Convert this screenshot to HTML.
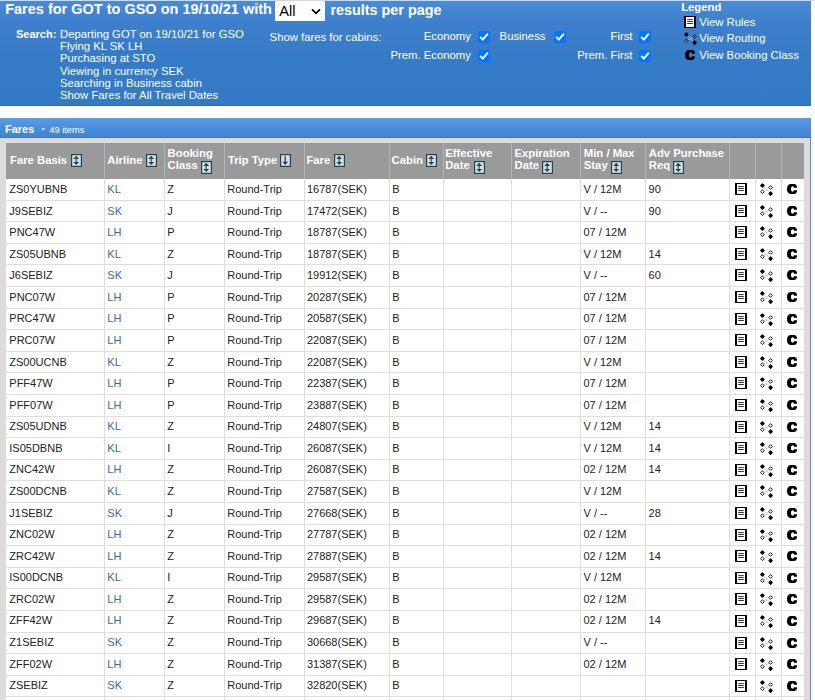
<!DOCTYPE html><html><head><meta charset="utf-8"><style>

html,body{margin:0;padding:0;}
body{width:815px;height:700px;overflow:hidden;position:relative;background:#fff;font-family:"Liberation Sans",sans-serif;}
.a{position:absolute;white-space:nowrap;}
.w{color:#fff;}
.hdr{position:absolute;left:0;top:1px;width:811px;height:105px;background:linear-gradient(to bottom,#4b8bd6 0px,#3d7fcc 22px,#367bc6 60px,#3379c4 104px,#2c6fba 104px,#2c6fba 105px);}
.top{position:absolute;left:0;top:0;width:815px;height:1px;background:#d5d7da;}
.bar{position:absolute;left:0;top:118px;width:811px;height:20px;background:linear-gradient(to bottom,#5b9ce2 0px,#4a8dda 10px,#3f84d4 19px,#3579c6 19px);}
.pbody{position:absolute;left:0;top:138px;width:810px;height:562px;background:#dcdcdc;border-right:1px solid #5a8fd0;}
.gh{position:absolute;background:#9a9a9a;}
.gb{position:absolute;background:#fff;}
.vl{position:absolute;width:1px;}
.hl{position:absolute;height:1px;}
.t{position:absolute;white-space:nowrap;font-size:11.0px;color:#222;line-height:1;}
.th{position:absolute;white-space:nowrap;font-size:11.3px;font-weight:bold;color:#fff;line-height:12.2px;}
.lk{color:#4068a8;}
.cb{position:absolute;width:12px;height:12px;border-radius:2px;background:#0075ff;}

</style></head><body>
<div class="top"></div>
<div class="hdr"></div>
<div class="a" style="left:5.20px;top:2.43px;font-size:14.5px;line-height:1;font-weight:bold;color:#fff;">Fares for GOT to GSO on 19/10/21 with</div>
<div class="a" style="left:330.40px;top:2.51px;font-size:14.4px;line-height:1;font-weight:bold;color:#fff;">results per page</div>
<div class="a" style="left:275px;top:1px;width:50px;height:20px;background:#fff;border-radius:1px"></div>
<div class="a" style="left:279.30px;top:3.84px;font-size:14.6px;line-height:1;color:#000;">All</div>
<svg class="a" style="left:310.8px;top:8.2px" width="10" height="7" viewBox="0 0 10 7"><path d="M1 1.3 L5 5.3 L9 1.3" fill="none" stroke="#000" stroke-width="1.8"/></svg>
<div class="a" style="left:16.00px;top:28.89px;font-size:11.0px;line-height:1;font-weight:bold;color:#fff;">Search:</div>
<div class="a" style="left:60.00px;top:28.63px;font-size:11.3px;line-height:1;color:#fff;">Departing GOT on 19/10/21 for GSO</div>
<div class="a" style="left:60.00px;top:40.93px;font-size:11.3px;line-height:1;color:#fff;">Flying KL SK LH</div>
<div class="a" style="left:60.00px;top:53.23px;font-size:11.3px;line-height:1;color:#fff;">Purchasing at STO</div>
<div class="a" style="left:60.00px;top:65.53px;font-size:11.3px;line-height:1;color:#fff;">Viewing in currency SEK</div>
<div class="a" style="left:60.00px;top:77.83px;font-size:11.3px;line-height:1;color:#fff;">Searching in Business cabin</div>
<div class="a" style="left:60.00px;top:90.13px;font-size:11.3px;line-height:1;color:#fff;">Show Fares for All Travel Dates</div>
<div class="a" style="left:269.60px;top:32.03px;font-size:11.3px;line-height:1;color:#fff;">Show fares for cabins:</div>
<div class="a" style="right:344.20px;top:31.43px;font-size:11.3px;line-height:1;color:#fff;text-align:right">Economy</div>
<div class="cb" style="left:478px;top:31.3px"><svg width="12" height="12" viewBox="0 0 12 12" style="position:absolute;left:0;top:0"><path d="M2.2 5.9 L4.8 8.6 L9.9 2.6" fill="none" stroke="#fff" stroke-width="2"/></svg></div>
<div class="a" style="left:499.60px;top:31.43px;font-size:11.3px;line-height:1;color:#fff;">Business</div>
<div class="cb" style="left:553.6px;top:31.3px"><svg width="12" height="12" viewBox="0 0 12 12" style="position:absolute;left:0;top:0"><path d="M2.2 5.9 L4.8 8.6 L9.9 2.6" fill="none" stroke="#fff" stroke-width="2"/></svg></div>
<div class="a" style="right:182.50px;top:31.43px;font-size:11.3px;line-height:1;color:#fff;text-align:right">First</div>
<div class="cb" style="left:639.4px;top:31.3px"><svg width="12" height="12" viewBox="0 0 12 12" style="position:absolute;left:0;top:0"><path d="M2.2 5.9 L4.8 8.6 L9.9 2.6" fill="none" stroke="#fff" stroke-width="2"/></svg></div>
<div class="a" style="right:344.20px;top:50.03px;font-size:11.3px;line-height:1;color:#fff;text-align:right">Prem. Economy</div>
<div class="cb" style="left:478px;top:50.2px"><svg width="12" height="12" viewBox="0 0 12 12" style="position:absolute;left:0;top:0"><path d="M2.2 5.9 L4.8 8.6 L9.9 2.6" fill="none" stroke="#fff" stroke-width="2"/></svg></div>
<div class="a" style="right:182.50px;top:50.03px;font-size:11.3px;line-height:1;color:#fff;text-align:right">Prem. First</div>
<div class="cb" style="left:639.4px;top:50.2px"><svg width="12" height="12" viewBox="0 0 12 12" style="position:absolute;left:0;top:0"><path d="M2.2 5.9 L4.8 8.6 L9.9 2.6" fill="none" stroke="#fff" stroke-width="2"/></svg></div>
<div class="a" style="left:681.20px;top:2.13px;font-size:11.3px;line-height:1;font-weight:bold;color:#fff;">Legend</div>
<div class="a" style="left:684px;top:16px;line-height:0"><svg width="12" height="12" viewBox="0 0 12 12"><rect x="0" y="0" width="12" height="12" fill="#000"/><rect x="2" y="1" width="8" height="10" fill="#fff"/><rect x="3.2" y="3.1" width="5.6" height="1" fill="#333"/><rect x="3.2" y="5" width="5.6" height="1" fill="#333"/><rect x="3.2" y="7" width="5.6" height="1" fill="#333"/></svg></div>
<div class="a" style="left:699.20px;top:16.63px;font-size:11.3px;line-height:1;color:#fff;">View Rules</div>
<div class="a" style="left:683.5px;top:32px;line-height:0"><svg width="14" height="13" viewBox="0 0 14 13"><path d="M3.6 3.7 L9.4 9.4 M3.8 8.0 L9.2 5.2" fill="none" stroke="#c4c4c4" stroke-width="0.7"/><path d="M2.40 0.90 L4.00 2.50 L2.40 4.10 L0.80 2.50 Z M10.60 9.00 L12.20 10.60 L10.60 12.20 L9.00 10.60 Z" fill="#000" stroke="#000" stroke-width="1.3" stroke-linejoin="round"/><path d="M10.60 2.65 L12.45 4.50 L10.60 6.35 L8.75 4.50 Z M2.40 6.85 L4.25 8.70 L2.40 10.55 L0.55 8.70 Z" fill="none" stroke="#1a1a1a" stroke-width="1" stroke-linejoin="round"/></svg></div>
<div class="a" style="left:699.20px;top:33.43px;font-size:11.3px;line-height:1;color:#fff;">View Routing</div>
<div class="a" style="left:685px;top:50px;line-height:0"><svg width="10" height="10" viewBox="0 0 10 10"><path d="M3.4 0 L7.4 0 Q9.5 0.4 10 2.6 L10 3.7 L7 3.7 Q6.8 2.3 5.5 2.3 Q3.9 2.4 3.9 5 Q3.9 7.6 5.5 7.7 Q6.8 7.7 7 6.3 L10 6.3 L10 7.4 Q9.5 9.6 7.4 10 L3.4 10 Q0 9.6 0 5 Q0 0.4 3.4 0 Z" fill="#000"/></svg></div>
<div class="a" style="left:699.20px;top:50.13px;font-size:11.3px;line-height:1;color:#fff;">View Booking Class</div>
<div class="bar"></div>
<div class="a" style="left:5.00px;top:123.89px;font-size:11.0px;line-height:1;font-weight:bold;color:#fff;">Fares</div><div class="a" style="left:41.80px;top:125.23px;font-size:8px;line-height:1;color:#fff;">&bull;</div><div class="a" style="left:49.30px;top:126.33px;font-size:9.3px;line-height:1;color:#fff;">49 items</div>
<div class="pbody"></div>
<div class="gh" style="left:6px;top:143px;width:798.2px;height:35.69999999999999px"></div>
<div class="gb" style="left:6px;top:178.7px;width:798.2px;height:521.3px"></div>
<div class="vl" style="left:104px;top:143px;height:35.69999999999999px;background:#b4b4b4"></div>
<div class="vl" style="left:104px;top:178.7px;height:521.3px;background:#dedede"></div>
<div class="vl" style="left:164px;top:143px;height:35.69999999999999px;background:#b4b4b4"></div>
<div class="vl" style="left:164px;top:178.7px;height:521.3px;background:#dedede"></div>
<div class="vl" style="left:224px;top:143px;height:35.69999999999999px;background:#b4b4b4"></div>
<div class="vl" style="left:224px;top:178.7px;height:521.3px;background:#dedede"></div>
<div class="vl" style="left:303.6px;top:143px;height:35.69999999999999px;background:#b4b4b4"></div>
<div class="vl" style="left:303.6px;top:178.7px;height:521.3px;background:#dedede"></div>
<div class="vl" style="left:389px;top:143px;height:35.69999999999999px;background:#b4b4b4"></div>
<div class="vl" style="left:389px;top:178.7px;height:521.3px;background:#dedede"></div>
<div class="vl" style="left:442.6px;top:143px;height:35.69999999999999px;background:#b4b4b4"></div>
<div class="vl" style="left:442.6px;top:178.7px;height:521.3px;background:#dedede"></div>
<div class="vl" style="left:510.6px;top:143px;height:35.69999999999999px;background:#b4b4b4"></div>
<div class="vl" style="left:510.6px;top:178.7px;height:521.3px;background:#dedede"></div>
<div class="vl" style="left:580.2px;top:143px;height:35.69999999999999px;background:#b4b4b4"></div>
<div class="vl" style="left:580.2px;top:178.7px;height:521.3px;background:#dedede"></div>
<div class="vl" style="left:645.3px;top:143px;height:35.69999999999999px;background:#b4b4b4"></div>
<div class="vl" style="left:645.3px;top:178.7px;height:521.3px;background:#dedede"></div>
<div class="vl" style="left:729px;top:143px;height:35.69999999999999px;background:#b4b4b4"></div>
<div class="vl" style="left:729px;top:178.7px;height:521.3px;background:#dedede"></div>
<div class="vl" style="left:755px;top:143px;height:35.69999999999999px;background:#b4b4b4"></div>
<div class="vl" style="left:755px;top:178.7px;height:521.3px;background:#dedede"></div>
<div class="vl" style="left:781px;top:143px;height:35.69999999999999px;background:#b4b4b4"></div>
<div class="vl" style="left:781px;top:178.7px;height:521.3px;background:#dedede"></div>
<div class="hl" style="left:6px;top:199.69px;width:798.2px;background:#dedede"></div>
<div class="hl" style="left:6px;top:221.28px;width:798.2px;background:#dedede"></div>
<div class="hl" style="left:6px;top:242.87px;width:798.2px;background:#dedede"></div>
<div class="hl" style="left:6px;top:264.46px;width:798.2px;background:#dedede"></div>
<div class="hl" style="left:6px;top:286.05px;width:798.2px;background:#dedede"></div>
<div class="hl" style="left:6px;top:307.64px;width:798.2px;background:#dedede"></div>
<div class="hl" style="left:6px;top:329.24px;width:798.2px;background:#dedede"></div>
<div class="hl" style="left:6px;top:350.83px;width:798.2px;background:#dedede"></div>
<div class="hl" style="left:6px;top:372.42px;width:798.2px;background:#dedede"></div>
<div class="hl" style="left:6px;top:394.01px;width:798.2px;background:#dedede"></div>
<div class="hl" style="left:6px;top:415.60px;width:798.2px;background:#dedede"></div>
<div class="hl" style="left:6px;top:437.19px;width:798.2px;background:#dedede"></div>
<div class="hl" style="left:6px;top:458.78px;width:798.2px;background:#dedede"></div>
<div class="hl" style="left:6px;top:480.37px;width:798.2px;background:#dedede"></div>
<div class="hl" style="left:6px;top:501.96px;width:798.2px;background:#dedede"></div>
<div class="hl" style="left:6px;top:523.56px;width:798.2px;background:#dedede"></div>
<div class="hl" style="left:6px;top:545.15px;width:798.2px;background:#dedede"></div>
<div class="hl" style="left:6px;top:566.74px;width:798.2px;background:#dedede"></div>
<div class="hl" style="left:6px;top:588.33px;width:798.2px;background:#dedede"></div>
<div class="hl" style="left:6px;top:609.92px;width:798.2px;background:#dedede"></div>
<div class="hl" style="left:6px;top:631.51px;width:798.2px;background:#dedede"></div>
<div class="hl" style="left:6px;top:653.10px;width:798.2px;background:#dedede"></div>
<div class="hl" style="left:6px;top:674.69px;width:798.2px;background:#dedede"></div>
<div class="hl" style="left:6px;top:696.28px;width:798.2px;background:#dedede"></div>
<div class="a" style="left:10.00px;top:154.63px;font-size:11.3px;line-height:1;font-weight:bold;color:#fff;">Fare Basis</div>
<div class="a" style="left:71.00px;top:154.00px;line-height:0"><svg width="11" height="13" viewBox="0 0 11 13"><rect x="0.6" y="0.6" width="9.8" height="11.8" fill="#dcdce8" stroke="#1a4b4b" stroke-width="1.2"/><path d="M5.2 1.8 L2.3 4.9 L8.1 4.9 Z M2.3 8.0 L8.1 8.0 L5.2 11.1 Z" fill="#174848"/><rect x="4.5" y="4.6" width="1.4" height="3.6" fill="#3a6a6a"/></svg></div>
<div class="a" style="left:107.30px;top:154.63px;font-size:11.3px;line-height:1;font-weight:bold;color:#fff;">Airline</div>
<div class="a" style="left:145.60px;top:154.00px;line-height:0"><svg width="11" height="13" viewBox="0 0 11 13"><rect x="0.6" y="0.6" width="9.8" height="11.8" fill="#dcdce8" stroke="#1a4b4b" stroke-width="1.2"/><path d="M5.2 1.8 L2.3 4.9 L8.1 4.9 Z M2.3 8.0 L8.1 8.0 L5.2 11.1 Z" fill="#174848"/><rect x="4.5" y="4.6" width="1.4" height="3.6" fill="#3a6a6a"/></svg></div>
<div class="a" style="left:167.60px;top:147.93px;font-size:11.3px;line-height:1;font-weight:bold;color:#fff;">Booking</div>
<div class="a" style="left:167.60px;top:160.03px;font-size:11.3px;line-height:1;font-weight:bold;color:#fff;">Class</div>
<div class="a" style="left:200.60px;top:160.50px;line-height:0"><svg width="11" height="13" viewBox="0 0 11 13"><rect x="0.6" y="0.6" width="9.8" height="11.8" fill="#dcdce8" stroke="#1a4b4b" stroke-width="1.2"/><path d="M5.2 1.8 L2.3 4.9 L8.1 4.9 Z M2.3 8.0 L8.1 8.0 L5.2 11.1 Z" fill="#174848"/><rect x="4.5" y="4.6" width="1.4" height="3.6" fill="#3a6a6a"/></svg></div>
<div class="a" style="left:227.90px;top:154.63px;font-size:11.3px;line-height:1;font-weight:bold;color:#fff;">Trip Type</div>
<div class="a" style="left:279.60px;top:154.00px;line-height:0"><svg width="11" height="13" viewBox="0 0 11 13"><rect x="0.6" y="0.6" width="9.8" height="11.8" fill="#dcdce8" stroke="#1a4b4b" stroke-width="1.2"/><rect x="4.4" y="1.8" width="1.6" height="6.6" fill="#3a6a6a"/><path d="M2.3 7.7 L8.1 7.7 L5.2 10.9 Z" fill="#174848"/></svg></div>
<div class="a" style="left:306.40px;top:154.63px;font-size:11.3px;line-height:1;font-weight:bold;color:#fff;">Fare</div>
<div class="a" style="left:334.40px;top:154.00px;line-height:0"><svg width="11" height="13" viewBox="0 0 11 13"><rect x="0.6" y="0.6" width="9.8" height="11.8" fill="#dcdce8" stroke="#1a4b4b" stroke-width="1.2"/><path d="M5.2 1.8 L2.3 4.9 L8.1 4.9 Z M2.3 8.0 L8.1 8.0 L5.2 11.1 Z" fill="#174848"/><rect x="4.5" y="4.6" width="1.4" height="3.6" fill="#3a6a6a"/></svg></div>
<div class="a" style="left:391.60px;top:154.63px;font-size:11.3px;line-height:1;font-weight:bold;color:#fff;">Cabin</div>
<div class="a" style="left:426.40px;top:154.00px;line-height:0"><svg width="11" height="13" viewBox="0 0 11 13"><rect x="0.6" y="0.6" width="9.8" height="11.8" fill="#dcdce8" stroke="#1a4b4b" stroke-width="1.2"/><path d="M5.2 1.8 L2.3 4.9 L8.1 4.9 Z M2.3 8.0 L8.1 8.0 L5.2 11.1 Z" fill="#174848"/><rect x="4.5" y="4.6" width="1.4" height="3.6" fill="#3a6a6a"/></svg></div>
<div class="a" style="left:445.20px;top:147.93px;font-size:11.3px;line-height:1;font-weight:bold;color:#fff;">Effective</div>
<div class="a" style="left:445.20px;top:160.03px;font-size:11.3px;line-height:1;font-weight:bold;color:#fff;">Date</div>
<div class="a" style="left:473.60px;top:160.50px;line-height:0"><svg width="11" height="13" viewBox="0 0 11 13"><rect x="0.6" y="0.6" width="9.8" height="11.8" fill="#dcdce8" stroke="#1a4b4b" stroke-width="1.2"/><path d="M5.2 1.8 L2.3 4.9 L8.1 4.9 Z M2.3 8.0 L8.1 8.0 L5.2 11.1 Z" fill="#174848"/><rect x="4.5" y="4.6" width="1.4" height="3.6" fill="#3a6a6a"/></svg></div>
<div class="a" style="left:514.50px;top:147.93px;font-size:11.3px;line-height:1;font-weight:bold;color:#fff;">Expiration</div>
<div class="a" style="left:514.50px;top:160.03px;font-size:11.3px;line-height:1;font-weight:bold;color:#fff;">Date</div>
<div class="a" style="left:542.20px;top:160.50px;line-height:0"><svg width="11" height="13" viewBox="0 0 11 13"><rect x="0.6" y="0.6" width="9.8" height="11.8" fill="#dcdce8" stroke="#1a4b4b" stroke-width="1.2"/><path d="M5.2 1.8 L2.3 4.9 L8.1 4.9 Z M2.3 8.0 L8.1 8.0 L5.2 11.1 Z" fill="#174848"/><rect x="4.5" y="4.6" width="1.4" height="3.6" fill="#3a6a6a"/></svg></div>
<div class="a" style="left:583.80px;top:147.93px;font-size:11.3px;line-height:1;font-weight:bold;color:#fff;">Min / Max</div>
<div class="a" style="left:583.80px;top:160.03px;font-size:11.3px;line-height:1;font-weight:bold;color:#fff;">Stay</div>
<div class="a" style="left:611.40px;top:160.50px;line-height:0"><svg width="11" height="13" viewBox="0 0 11 13"><rect x="0.6" y="0.6" width="9.8" height="11.8" fill="#dcdce8" stroke="#1a4b4b" stroke-width="1.2"/><path d="M5.2 1.8 L2.3 4.9 L8.1 4.9 Z M2.3 8.0 L8.1 8.0 L5.2 11.1 Z" fill="#174848"/><rect x="4.5" y="4.6" width="1.4" height="3.6" fill="#3a6a6a"/></svg></div>
<div class="a" style="left:648.80px;top:147.93px;font-size:11.3px;line-height:1;font-weight:bold;color:#fff;">Adv Purchase</div>
<div class="a" style="left:648.80px;top:160.03px;font-size:11.3px;line-height:1;font-weight:bold;color:#fff;">Req</div>
<div class="a" style="left:673.20px;top:160.50px;line-height:0"><svg width="11" height="13" viewBox="0 0 11 13"><rect x="0.6" y="0.6" width="9.8" height="11.8" fill="#dcdce8" stroke="#1a4b4b" stroke-width="1.2"/><path d="M5.2 1.8 L2.3 4.9 L8.1 4.9 Z M2.3 8.0 L8.1 8.0 L5.2 11.1 Z" fill="#174848"/><rect x="4.5" y="4.6" width="1.4" height="3.6" fill="#3a6a6a"/></svg></div>
<div class="t" style="left:9.30px;top:183.99px">ZS0YUBNB</div>
<div class="t lk" style="left:107.30px;top:183.99px">KL</div>
<div class="t" style="left:167.30px;top:183.99px">Z</div>
<div class="t" style="left:227.30px;top:183.99px">Round-Trip</div>
<div class="t" style="left:306.90px;top:183.99px">16787(SEK)</div>
<div class="t" style="left:392.30px;top:183.99px">B</div>
<div class="t" style="left:583.50px;top:183.99px">V / 12M</div>
<div class="t" style="left:648.60px;top:183.99px">90</div>
<div class="a" style="left:735px;top:183.00px;line-height:0"><svg width="12" height="12" viewBox="0 0 12 12"><rect x="0" y="0" width="12" height="12" fill="#000"/><rect x="2" y="1" width="8" height="10" fill="#fff"/><rect x="3.2" y="3.1" width="5.6" height="1" fill="#333"/><rect x="3.2" y="5" width="5.6" height="1" fill="#333"/><rect x="3.2" y="7" width="5.6" height="1" fill="#333"/></svg></div><div class="a" style="left:760px;top:183.00px;line-height:0;margin-top:-0.1px"><svg width="14" height="13" viewBox="0 0 14 13"><path d="M3.6 3.7 L9.4 9.4 M3.8 8.0 L9.2 5.2" fill="none" stroke="#c4c4c4" stroke-width="0.7"/><path d="M2.40 0.90 L4.00 2.50 L2.40 4.10 L0.80 2.50 Z M10.60 9.00 L12.20 10.60 L10.60 12.20 L9.00 10.60 Z" fill="#000" stroke="#000" stroke-width="1.3" stroke-linejoin="round"/><path d="M10.60 2.65 L12.45 4.50 L10.60 6.35 L8.75 4.50 Z M2.40 6.85 L4.25 8.70 L2.40 10.55 L0.55 8.70 Z" fill="none" stroke="#1a1a1a" stroke-width="1" stroke-linejoin="round"/></svg></div><div class="a" style="left:787px;top:183.00px;line-height:0;margin-top:1px"><svg width="10" height="10" viewBox="0 0 10 10"><path d="M3.4 0 L7.4 0 Q9.5 0.4 10 2.6 L10 3.7 L7 3.7 Q6.8 2.3 5.5 2.3 Q3.9 2.4 3.9 5 Q3.9 7.6 5.5 7.7 Q6.8 7.7 7 6.3 L10 6.3 L10 7.4 Q9.5 9.6 7.4 10 L3.4 10 Q0 9.6 0 5 Q0 0.4 3.4 0 Z" fill="#000"/></svg></div>
<div class="t" style="left:9.30px;top:205.56px">J9SEBIZ</div>
<div class="t lk" style="left:107.30px;top:205.56px">SK</div>
<div class="t" style="left:167.30px;top:205.56px">J</div>
<div class="t" style="left:227.30px;top:205.56px">Round-Trip</div>
<div class="t" style="left:306.90px;top:205.56px">17472(SEK)</div>
<div class="t" style="left:392.30px;top:205.56px">B</div>
<div class="t" style="left:583.50px;top:205.56px">V / --</div>
<div class="t" style="left:648.60px;top:205.56px">90</div>
<div class="a" style="left:735px;top:204.60px;line-height:0"><svg width="12" height="12" viewBox="0 0 12 12"><rect x="0" y="0" width="12" height="12" fill="#000"/><rect x="2" y="1" width="8" height="10" fill="#fff"/><rect x="3.2" y="3.1" width="5.6" height="1" fill="#333"/><rect x="3.2" y="5" width="5.6" height="1" fill="#333"/><rect x="3.2" y="7" width="5.6" height="1" fill="#333"/></svg></div><div class="a" style="left:760px;top:204.60px;line-height:0;margin-top:-0.1px"><svg width="14" height="13" viewBox="0 0 14 13"><path d="M3.6 3.7 L9.4 9.4 M3.8 8.0 L9.2 5.2" fill="none" stroke="#c4c4c4" stroke-width="0.7"/><path d="M2.40 0.90 L4.00 2.50 L2.40 4.10 L0.80 2.50 Z M10.60 9.00 L12.20 10.60 L10.60 12.20 L9.00 10.60 Z" fill="#000" stroke="#000" stroke-width="1.3" stroke-linejoin="round"/><path d="M10.60 2.65 L12.45 4.50 L10.60 6.35 L8.75 4.50 Z M2.40 6.85 L4.25 8.70 L2.40 10.55 L0.55 8.70 Z" fill="none" stroke="#1a1a1a" stroke-width="1" stroke-linejoin="round"/></svg></div><div class="a" style="left:787px;top:204.60px;line-height:0;margin-top:1px"><svg width="10" height="10" viewBox="0 0 10 10"><path d="M3.4 0 L7.4 0 Q9.5 0.4 10 2.6 L10 3.7 L7 3.7 Q6.8 2.3 5.5 2.3 Q3.9 2.4 3.9 5 Q3.9 7.6 5.5 7.7 Q6.8 7.7 7 6.3 L10 6.3 L10 7.4 Q9.5 9.6 7.4 10 L3.4 10 Q0 9.6 0 5 Q0 0.4 3.4 0 Z" fill="#000"/></svg></div>
<div class="t" style="left:9.30px;top:227.13px">PNC47W</div>
<div class="t lk" style="left:107.30px;top:227.13px">LH</div>
<div class="t" style="left:167.30px;top:227.13px">P</div>
<div class="t" style="left:227.30px;top:227.13px">Round-Trip</div>
<div class="t" style="left:306.90px;top:227.13px">18787(SEK)</div>
<div class="t" style="left:392.30px;top:227.13px">B</div>
<div class="t" style="left:583.50px;top:227.13px">07 / 12M</div>
<div class="a" style="left:735px;top:226.20px;line-height:0"><svg width="12" height="12" viewBox="0 0 12 12"><rect x="0" y="0" width="12" height="12" fill="#000"/><rect x="2" y="1" width="8" height="10" fill="#fff"/><rect x="3.2" y="3.1" width="5.6" height="1" fill="#333"/><rect x="3.2" y="5" width="5.6" height="1" fill="#333"/><rect x="3.2" y="7" width="5.6" height="1" fill="#333"/></svg></div><div class="a" style="left:760px;top:226.20px;line-height:0;margin-top:-0.1px"><svg width="14" height="13" viewBox="0 0 14 13"><path d="M3.6 3.7 L9.4 9.4 M3.8 8.0 L9.2 5.2" fill="none" stroke="#c4c4c4" stroke-width="0.7"/><path d="M2.40 0.90 L4.00 2.50 L2.40 4.10 L0.80 2.50 Z M10.60 9.00 L12.20 10.60 L10.60 12.20 L9.00 10.60 Z" fill="#000" stroke="#000" stroke-width="1.3" stroke-linejoin="round"/><path d="M10.60 2.65 L12.45 4.50 L10.60 6.35 L8.75 4.50 Z M2.40 6.85 L4.25 8.70 L2.40 10.55 L0.55 8.70 Z" fill="none" stroke="#1a1a1a" stroke-width="1" stroke-linejoin="round"/></svg></div><div class="a" style="left:787px;top:226.20px;line-height:0;margin-top:1px"><svg width="10" height="10" viewBox="0 0 10 10"><path d="M3.4 0 L7.4 0 Q9.5 0.4 10 2.6 L10 3.7 L7 3.7 Q6.8 2.3 5.5 2.3 Q3.9 2.4 3.9 5 Q3.9 7.6 5.5 7.7 Q6.8 7.7 7 6.3 L10 6.3 L10 7.4 Q9.5 9.6 7.4 10 L3.4 10 Q0 9.6 0 5 Q0 0.4 3.4 0 Z" fill="#000"/></svg></div>
<div class="t" style="left:9.30px;top:248.70px">ZS05UBNB</div>
<div class="t lk" style="left:107.30px;top:248.70px">KL</div>
<div class="t" style="left:167.30px;top:248.70px">Z</div>
<div class="t" style="left:227.30px;top:248.70px">Round-Trip</div>
<div class="t" style="left:306.90px;top:248.70px">18787(SEK)</div>
<div class="t" style="left:392.30px;top:248.70px">B</div>
<div class="t" style="left:583.50px;top:248.70px">V / 12M</div>
<div class="t" style="left:648.60px;top:248.70px">14</div>
<div class="a" style="left:735px;top:247.80px;line-height:0"><svg width="12" height="12" viewBox="0 0 12 12"><rect x="0" y="0" width="12" height="12" fill="#000"/><rect x="2" y="1" width="8" height="10" fill="#fff"/><rect x="3.2" y="3.1" width="5.6" height="1" fill="#333"/><rect x="3.2" y="5" width="5.6" height="1" fill="#333"/><rect x="3.2" y="7" width="5.6" height="1" fill="#333"/></svg></div><div class="a" style="left:760px;top:247.80px;line-height:0;margin-top:-0.1px"><svg width="14" height="13" viewBox="0 0 14 13"><path d="M3.6 3.7 L9.4 9.4 M3.8 8.0 L9.2 5.2" fill="none" stroke="#c4c4c4" stroke-width="0.7"/><path d="M2.40 0.90 L4.00 2.50 L2.40 4.10 L0.80 2.50 Z M10.60 9.00 L12.20 10.60 L10.60 12.20 L9.00 10.60 Z" fill="#000" stroke="#000" stroke-width="1.3" stroke-linejoin="round"/><path d="M10.60 2.65 L12.45 4.50 L10.60 6.35 L8.75 4.50 Z M2.40 6.85 L4.25 8.70 L2.40 10.55 L0.55 8.70 Z" fill="none" stroke="#1a1a1a" stroke-width="1" stroke-linejoin="round"/></svg></div><div class="a" style="left:787px;top:247.80px;line-height:0;margin-top:1px"><svg width="10" height="10" viewBox="0 0 10 10"><path d="M3.4 0 L7.4 0 Q9.5 0.4 10 2.6 L10 3.7 L7 3.7 Q6.8 2.3 5.5 2.3 Q3.9 2.4 3.9 5 Q3.9 7.6 5.5 7.7 Q6.8 7.7 7 6.3 L10 6.3 L10 7.4 Q9.5 9.6 7.4 10 L3.4 10 Q0 9.6 0 5 Q0 0.4 3.4 0 Z" fill="#000"/></svg></div>
<div class="t" style="left:9.30px;top:270.27px">J6SEBIZ</div>
<div class="t lk" style="left:107.30px;top:270.27px">SK</div>
<div class="t" style="left:167.30px;top:270.27px">J</div>
<div class="t" style="left:227.30px;top:270.27px">Round-Trip</div>
<div class="t" style="left:306.90px;top:270.27px">19912(SEK)</div>
<div class="t" style="left:392.30px;top:270.27px">B</div>
<div class="t" style="left:583.50px;top:270.27px">V / --</div>
<div class="t" style="left:648.60px;top:270.27px">60</div>
<div class="a" style="left:735px;top:269.40px;line-height:0"><svg width="12" height="12" viewBox="0 0 12 12"><rect x="0" y="0" width="12" height="12" fill="#000"/><rect x="2" y="1" width="8" height="10" fill="#fff"/><rect x="3.2" y="3.1" width="5.6" height="1" fill="#333"/><rect x="3.2" y="5" width="5.6" height="1" fill="#333"/><rect x="3.2" y="7" width="5.6" height="1" fill="#333"/></svg></div><div class="a" style="left:760px;top:269.40px;line-height:0;margin-top:-0.1px"><svg width="14" height="13" viewBox="0 0 14 13"><path d="M3.6 3.7 L9.4 9.4 M3.8 8.0 L9.2 5.2" fill="none" stroke="#c4c4c4" stroke-width="0.7"/><path d="M2.40 0.90 L4.00 2.50 L2.40 4.10 L0.80 2.50 Z M10.60 9.00 L12.20 10.60 L10.60 12.20 L9.00 10.60 Z" fill="#000" stroke="#000" stroke-width="1.3" stroke-linejoin="round"/><path d="M10.60 2.65 L12.45 4.50 L10.60 6.35 L8.75 4.50 Z M2.40 6.85 L4.25 8.70 L2.40 10.55 L0.55 8.70 Z" fill="none" stroke="#1a1a1a" stroke-width="1" stroke-linejoin="round"/></svg></div><div class="a" style="left:787px;top:269.40px;line-height:0;margin-top:1px"><svg width="10" height="10" viewBox="0 0 10 10"><path d="M3.4 0 L7.4 0 Q9.5 0.4 10 2.6 L10 3.7 L7 3.7 Q6.8 2.3 5.5 2.3 Q3.9 2.4 3.9 5 Q3.9 7.6 5.5 7.7 Q6.8 7.7 7 6.3 L10 6.3 L10 7.4 Q9.5 9.6 7.4 10 L3.4 10 Q0 9.6 0 5 Q0 0.4 3.4 0 Z" fill="#000"/></svg></div>
<div class="t" style="left:9.30px;top:291.84px">PNC07W</div>
<div class="t lk" style="left:107.30px;top:291.84px">LH</div>
<div class="t" style="left:167.30px;top:291.84px">P</div>
<div class="t" style="left:227.30px;top:291.84px">Round-Trip</div>
<div class="t" style="left:306.90px;top:291.84px">20287(SEK)</div>
<div class="t" style="left:392.30px;top:291.84px">B</div>
<div class="t" style="left:583.50px;top:291.84px">07 / 12M</div>
<div class="a" style="left:735px;top:291.00px;line-height:0"><svg width="12" height="12" viewBox="0 0 12 12"><rect x="0" y="0" width="12" height="12" fill="#000"/><rect x="2" y="1" width="8" height="10" fill="#fff"/><rect x="3.2" y="3.1" width="5.6" height="1" fill="#333"/><rect x="3.2" y="5" width="5.6" height="1" fill="#333"/><rect x="3.2" y="7" width="5.6" height="1" fill="#333"/></svg></div><div class="a" style="left:760px;top:291.00px;line-height:0;margin-top:-0.1px"><svg width="14" height="13" viewBox="0 0 14 13"><path d="M3.6 3.7 L9.4 9.4 M3.8 8.0 L9.2 5.2" fill="none" stroke="#c4c4c4" stroke-width="0.7"/><path d="M2.40 0.90 L4.00 2.50 L2.40 4.10 L0.80 2.50 Z M10.60 9.00 L12.20 10.60 L10.60 12.20 L9.00 10.60 Z" fill="#000" stroke="#000" stroke-width="1.3" stroke-linejoin="round"/><path d="M10.60 2.65 L12.45 4.50 L10.60 6.35 L8.75 4.50 Z M2.40 6.85 L4.25 8.70 L2.40 10.55 L0.55 8.70 Z" fill="none" stroke="#1a1a1a" stroke-width="1" stroke-linejoin="round"/></svg></div><div class="a" style="left:787px;top:291.00px;line-height:0;margin-top:1px"><svg width="10" height="10" viewBox="0 0 10 10"><path d="M3.4 0 L7.4 0 Q9.5 0.4 10 2.6 L10 3.7 L7 3.7 Q6.8 2.3 5.5 2.3 Q3.9 2.4 3.9 5 Q3.9 7.6 5.5 7.7 Q6.8 7.7 7 6.3 L10 6.3 L10 7.4 Q9.5 9.6 7.4 10 L3.4 10 Q0 9.6 0 5 Q0 0.4 3.4 0 Z" fill="#000"/></svg></div>
<div class="t" style="left:9.30px;top:313.41px">PRC47W</div>
<div class="t lk" style="left:107.30px;top:313.41px">LH</div>
<div class="t" style="left:167.30px;top:313.41px">P</div>
<div class="t" style="left:227.30px;top:313.41px">Round-Trip</div>
<div class="t" style="left:306.90px;top:313.41px">20587(SEK)</div>
<div class="t" style="left:392.30px;top:313.41px">B</div>
<div class="t" style="left:583.50px;top:313.41px">07 / 12M</div>
<div class="a" style="left:735px;top:312.60px;line-height:0"><svg width="12" height="12" viewBox="0 0 12 12"><rect x="0" y="0" width="12" height="12" fill="#000"/><rect x="2" y="1" width="8" height="10" fill="#fff"/><rect x="3.2" y="3.1" width="5.6" height="1" fill="#333"/><rect x="3.2" y="5" width="5.6" height="1" fill="#333"/><rect x="3.2" y="7" width="5.6" height="1" fill="#333"/></svg></div><div class="a" style="left:760px;top:312.60px;line-height:0;margin-top:-0.1px"><svg width="14" height="13" viewBox="0 0 14 13"><path d="M3.6 3.7 L9.4 9.4 M3.8 8.0 L9.2 5.2" fill="none" stroke="#c4c4c4" stroke-width="0.7"/><path d="M2.40 0.90 L4.00 2.50 L2.40 4.10 L0.80 2.50 Z M10.60 9.00 L12.20 10.60 L10.60 12.20 L9.00 10.60 Z" fill="#000" stroke="#000" stroke-width="1.3" stroke-linejoin="round"/><path d="M10.60 2.65 L12.45 4.50 L10.60 6.35 L8.75 4.50 Z M2.40 6.85 L4.25 8.70 L2.40 10.55 L0.55 8.70 Z" fill="none" stroke="#1a1a1a" stroke-width="1" stroke-linejoin="round"/></svg></div><div class="a" style="left:787px;top:312.60px;line-height:0;margin-top:1px"><svg width="10" height="10" viewBox="0 0 10 10"><path d="M3.4 0 L7.4 0 Q9.5 0.4 10 2.6 L10 3.7 L7 3.7 Q6.8 2.3 5.5 2.3 Q3.9 2.4 3.9 5 Q3.9 7.6 5.5 7.7 Q6.8 7.7 7 6.3 L10 6.3 L10 7.4 Q9.5 9.6 7.4 10 L3.4 10 Q0 9.6 0 5 Q0 0.4 3.4 0 Z" fill="#000"/></svg></div>
<div class="t" style="left:9.30px;top:334.98px">PRC07W</div>
<div class="t lk" style="left:107.30px;top:334.98px">LH</div>
<div class="t" style="left:167.30px;top:334.98px">P</div>
<div class="t" style="left:227.30px;top:334.98px">Round-Trip</div>
<div class="t" style="left:306.90px;top:334.98px">22087(SEK)</div>
<div class="t" style="left:392.30px;top:334.98px">B</div>
<div class="t" style="left:583.50px;top:334.98px">07 / 12M</div>
<div class="a" style="left:735px;top:334.20px;line-height:0"><svg width="12" height="12" viewBox="0 0 12 12"><rect x="0" y="0" width="12" height="12" fill="#000"/><rect x="2" y="1" width="8" height="10" fill="#fff"/><rect x="3.2" y="3.1" width="5.6" height="1" fill="#333"/><rect x="3.2" y="5" width="5.6" height="1" fill="#333"/><rect x="3.2" y="7" width="5.6" height="1" fill="#333"/></svg></div><div class="a" style="left:760px;top:334.20px;line-height:0;margin-top:-0.1px"><svg width="14" height="13" viewBox="0 0 14 13"><path d="M3.6 3.7 L9.4 9.4 M3.8 8.0 L9.2 5.2" fill="none" stroke="#c4c4c4" stroke-width="0.7"/><path d="M2.40 0.90 L4.00 2.50 L2.40 4.10 L0.80 2.50 Z M10.60 9.00 L12.20 10.60 L10.60 12.20 L9.00 10.60 Z" fill="#000" stroke="#000" stroke-width="1.3" stroke-linejoin="round"/><path d="M10.60 2.65 L12.45 4.50 L10.60 6.35 L8.75 4.50 Z M2.40 6.85 L4.25 8.70 L2.40 10.55 L0.55 8.70 Z" fill="none" stroke="#1a1a1a" stroke-width="1" stroke-linejoin="round"/></svg></div><div class="a" style="left:787px;top:334.20px;line-height:0;margin-top:1px"><svg width="10" height="10" viewBox="0 0 10 10"><path d="M3.4 0 L7.4 0 Q9.5 0.4 10 2.6 L10 3.7 L7 3.7 Q6.8 2.3 5.5 2.3 Q3.9 2.4 3.9 5 Q3.9 7.6 5.5 7.7 Q6.8 7.7 7 6.3 L10 6.3 L10 7.4 Q9.5 9.6 7.4 10 L3.4 10 Q0 9.6 0 5 Q0 0.4 3.4 0 Z" fill="#000"/></svg></div>
<div class="t" style="left:9.30px;top:356.55px">ZS00UCNB</div>
<div class="t lk" style="left:107.30px;top:356.55px">KL</div>
<div class="t" style="left:167.30px;top:356.55px">Z</div>
<div class="t" style="left:227.30px;top:356.55px">Round-Trip</div>
<div class="t" style="left:306.90px;top:356.55px">22087(SEK)</div>
<div class="t" style="left:392.30px;top:356.55px">B</div>
<div class="t" style="left:583.50px;top:356.55px">V / 12M</div>
<div class="a" style="left:735px;top:355.80px;line-height:0"><svg width="12" height="12" viewBox="0 0 12 12"><rect x="0" y="0" width="12" height="12" fill="#000"/><rect x="2" y="1" width="8" height="10" fill="#fff"/><rect x="3.2" y="3.1" width="5.6" height="1" fill="#333"/><rect x="3.2" y="5" width="5.6" height="1" fill="#333"/><rect x="3.2" y="7" width="5.6" height="1" fill="#333"/></svg></div><div class="a" style="left:760px;top:355.80px;line-height:0;margin-top:-0.1px"><svg width="14" height="13" viewBox="0 0 14 13"><path d="M3.6 3.7 L9.4 9.4 M3.8 8.0 L9.2 5.2" fill="none" stroke="#c4c4c4" stroke-width="0.7"/><path d="M2.40 0.90 L4.00 2.50 L2.40 4.10 L0.80 2.50 Z M10.60 9.00 L12.20 10.60 L10.60 12.20 L9.00 10.60 Z" fill="#000" stroke="#000" stroke-width="1.3" stroke-linejoin="round"/><path d="M10.60 2.65 L12.45 4.50 L10.60 6.35 L8.75 4.50 Z M2.40 6.85 L4.25 8.70 L2.40 10.55 L0.55 8.70 Z" fill="none" stroke="#1a1a1a" stroke-width="1" stroke-linejoin="round"/></svg></div><div class="a" style="left:787px;top:355.80px;line-height:0;margin-top:1px"><svg width="10" height="10" viewBox="0 0 10 10"><path d="M3.4 0 L7.4 0 Q9.5 0.4 10 2.6 L10 3.7 L7 3.7 Q6.8 2.3 5.5 2.3 Q3.9 2.4 3.9 5 Q3.9 7.6 5.5 7.7 Q6.8 7.7 7 6.3 L10 6.3 L10 7.4 Q9.5 9.6 7.4 10 L3.4 10 Q0 9.6 0 5 Q0 0.4 3.4 0 Z" fill="#000"/></svg></div>
<div class="t" style="left:9.30px;top:378.12px">PFF47W</div>
<div class="t lk" style="left:107.30px;top:378.12px">LH</div>
<div class="t" style="left:167.30px;top:378.12px">P</div>
<div class="t" style="left:227.30px;top:378.12px">Round-Trip</div>
<div class="t" style="left:306.90px;top:378.12px">22387(SEK)</div>
<div class="t" style="left:392.30px;top:378.12px">B</div>
<div class="t" style="left:583.50px;top:378.12px">07 / 12M</div>
<div class="a" style="left:735px;top:377.40px;line-height:0"><svg width="12" height="12" viewBox="0 0 12 12"><rect x="0" y="0" width="12" height="12" fill="#000"/><rect x="2" y="1" width="8" height="10" fill="#fff"/><rect x="3.2" y="3.1" width="5.6" height="1" fill="#333"/><rect x="3.2" y="5" width="5.6" height="1" fill="#333"/><rect x="3.2" y="7" width="5.6" height="1" fill="#333"/></svg></div><div class="a" style="left:760px;top:377.40px;line-height:0;margin-top:-0.1px"><svg width="14" height="13" viewBox="0 0 14 13"><path d="M3.6 3.7 L9.4 9.4 M3.8 8.0 L9.2 5.2" fill="none" stroke="#c4c4c4" stroke-width="0.7"/><path d="M2.40 0.90 L4.00 2.50 L2.40 4.10 L0.80 2.50 Z M10.60 9.00 L12.20 10.60 L10.60 12.20 L9.00 10.60 Z" fill="#000" stroke="#000" stroke-width="1.3" stroke-linejoin="round"/><path d="M10.60 2.65 L12.45 4.50 L10.60 6.35 L8.75 4.50 Z M2.40 6.85 L4.25 8.70 L2.40 10.55 L0.55 8.70 Z" fill="none" stroke="#1a1a1a" stroke-width="1" stroke-linejoin="round"/></svg></div><div class="a" style="left:787px;top:377.40px;line-height:0;margin-top:1px"><svg width="10" height="10" viewBox="0 0 10 10"><path d="M3.4 0 L7.4 0 Q9.5 0.4 10 2.6 L10 3.7 L7 3.7 Q6.8 2.3 5.5 2.3 Q3.9 2.4 3.9 5 Q3.9 7.6 5.5 7.7 Q6.8 7.7 7 6.3 L10 6.3 L10 7.4 Q9.5 9.6 7.4 10 L3.4 10 Q0 9.6 0 5 Q0 0.4 3.4 0 Z" fill="#000"/></svg></div>
<div class="t" style="left:9.30px;top:399.69px">PFF07W</div>
<div class="t lk" style="left:107.30px;top:399.69px">LH</div>
<div class="t" style="left:167.30px;top:399.69px">P</div>
<div class="t" style="left:227.30px;top:399.69px">Round-Trip</div>
<div class="t" style="left:306.90px;top:399.69px">23887(SEK)</div>
<div class="t" style="left:392.30px;top:399.69px">B</div>
<div class="t" style="left:583.50px;top:399.69px">07 / 12M</div>
<div class="a" style="left:735px;top:399.00px;line-height:0"><svg width="12" height="12" viewBox="0 0 12 12"><rect x="0" y="0" width="12" height="12" fill="#000"/><rect x="2" y="1" width="8" height="10" fill="#fff"/><rect x="3.2" y="3.1" width="5.6" height="1" fill="#333"/><rect x="3.2" y="5" width="5.6" height="1" fill="#333"/><rect x="3.2" y="7" width="5.6" height="1" fill="#333"/></svg></div><div class="a" style="left:760px;top:399.00px;line-height:0;margin-top:-0.1px"><svg width="14" height="13" viewBox="0 0 14 13"><path d="M3.6 3.7 L9.4 9.4 M3.8 8.0 L9.2 5.2" fill="none" stroke="#c4c4c4" stroke-width="0.7"/><path d="M2.40 0.90 L4.00 2.50 L2.40 4.10 L0.80 2.50 Z M10.60 9.00 L12.20 10.60 L10.60 12.20 L9.00 10.60 Z" fill="#000" stroke="#000" stroke-width="1.3" stroke-linejoin="round"/><path d="M10.60 2.65 L12.45 4.50 L10.60 6.35 L8.75 4.50 Z M2.40 6.85 L4.25 8.70 L2.40 10.55 L0.55 8.70 Z" fill="none" stroke="#1a1a1a" stroke-width="1" stroke-linejoin="round"/></svg></div><div class="a" style="left:787px;top:399.00px;line-height:0;margin-top:1px"><svg width="10" height="10" viewBox="0 0 10 10"><path d="M3.4 0 L7.4 0 Q9.5 0.4 10 2.6 L10 3.7 L7 3.7 Q6.8 2.3 5.5 2.3 Q3.9 2.4 3.9 5 Q3.9 7.6 5.5 7.7 Q6.8 7.7 7 6.3 L10 6.3 L10 7.4 Q9.5 9.6 7.4 10 L3.4 10 Q0 9.6 0 5 Q0 0.4 3.4 0 Z" fill="#000"/></svg></div>
<div class="t" style="left:9.30px;top:421.26px">ZS05UDNB</div>
<div class="t lk" style="left:107.30px;top:421.26px">KL</div>
<div class="t" style="left:167.30px;top:421.26px">Z</div>
<div class="t" style="left:227.30px;top:421.26px">Round-Trip</div>
<div class="t" style="left:306.90px;top:421.26px">24807(SEK)</div>
<div class="t" style="left:392.30px;top:421.26px">B</div>
<div class="t" style="left:583.50px;top:421.26px">V / 12M</div>
<div class="t" style="left:648.60px;top:421.26px">14</div>
<div class="a" style="left:735px;top:420.60px;line-height:0"><svg width="12" height="12" viewBox="0 0 12 12"><rect x="0" y="0" width="12" height="12" fill="#000"/><rect x="2" y="1" width="8" height="10" fill="#fff"/><rect x="3.2" y="3.1" width="5.6" height="1" fill="#333"/><rect x="3.2" y="5" width="5.6" height="1" fill="#333"/><rect x="3.2" y="7" width="5.6" height="1" fill="#333"/></svg></div><div class="a" style="left:760px;top:420.60px;line-height:0;margin-top:-0.1px"><svg width="14" height="13" viewBox="0 0 14 13"><path d="M3.6 3.7 L9.4 9.4 M3.8 8.0 L9.2 5.2" fill="none" stroke="#c4c4c4" stroke-width="0.7"/><path d="M2.40 0.90 L4.00 2.50 L2.40 4.10 L0.80 2.50 Z M10.60 9.00 L12.20 10.60 L10.60 12.20 L9.00 10.60 Z" fill="#000" stroke="#000" stroke-width="1.3" stroke-linejoin="round"/><path d="M10.60 2.65 L12.45 4.50 L10.60 6.35 L8.75 4.50 Z M2.40 6.85 L4.25 8.70 L2.40 10.55 L0.55 8.70 Z" fill="none" stroke="#1a1a1a" stroke-width="1" stroke-linejoin="round"/></svg></div><div class="a" style="left:787px;top:420.60px;line-height:0;margin-top:1px"><svg width="10" height="10" viewBox="0 0 10 10"><path d="M3.4 0 L7.4 0 Q9.5 0.4 10 2.6 L10 3.7 L7 3.7 Q6.8 2.3 5.5 2.3 Q3.9 2.4 3.9 5 Q3.9 7.6 5.5 7.7 Q6.8 7.7 7 6.3 L10 6.3 L10 7.4 Q9.5 9.6 7.4 10 L3.4 10 Q0 9.6 0 5 Q0 0.4 3.4 0 Z" fill="#000"/></svg></div>
<div class="t" style="left:9.30px;top:442.83px">IS05DBNB</div>
<div class="t lk" style="left:107.30px;top:442.83px">KL</div>
<div class="t" style="left:167.30px;top:442.83px">I</div>
<div class="t" style="left:227.30px;top:442.83px">Round-Trip</div>
<div class="t" style="left:306.90px;top:442.83px">26087(SEK)</div>
<div class="t" style="left:392.30px;top:442.83px">B</div>
<div class="t" style="left:583.50px;top:442.83px">V / 12M</div>
<div class="t" style="left:648.60px;top:442.83px">14</div>
<div class="a" style="left:735px;top:442.20px;line-height:0"><svg width="12" height="12" viewBox="0 0 12 12"><rect x="0" y="0" width="12" height="12" fill="#000"/><rect x="2" y="1" width="8" height="10" fill="#fff"/><rect x="3.2" y="3.1" width="5.6" height="1" fill="#333"/><rect x="3.2" y="5" width="5.6" height="1" fill="#333"/><rect x="3.2" y="7" width="5.6" height="1" fill="#333"/></svg></div><div class="a" style="left:760px;top:442.20px;line-height:0;margin-top:-0.1px"><svg width="14" height="13" viewBox="0 0 14 13"><path d="M3.6 3.7 L9.4 9.4 M3.8 8.0 L9.2 5.2" fill="none" stroke="#c4c4c4" stroke-width="0.7"/><path d="M2.40 0.90 L4.00 2.50 L2.40 4.10 L0.80 2.50 Z M10.60 9.00 L12.20 10.60 L10.60 12.20 L9.00 10.60 Z" fill="#000" stroke="#000" stroke-width="1.3" stroke-linejoin="round"/><path d="M10.60 2.65 L12.45 4.50 L10.60 6.35 L8.75 4.50 Z M2.40 6.85 L4.25 8.70 L2.40 10.55 L0.55 8.70 Z" fill="none" stroke="#1a1a1a" stroke-width="1" stroke-linejoin="round"/></svg></div><div class="a" style="left:787px;top:442.20px;line-height:0;margin-top:1px"><svg width="10" height="10" viewBox="0 0 10 10"><path d="M3.4 0 L7.4 0 Q9.5 0.4 10 2.6 L10 3.7 L7 3.7 Q6.8 2.3 5.5 2.3 Q3.9 2.4 3.9 5 Q3.9 7.6 5.5 7.7 Q6.8 7.7 7 6.3 L10 6.3 L10 7.4 Q9.5 9.6 7.4 10 L3.4 10 Q0 9.6 0 5 Q0 0.4 3.4 0 Z" fill="#000"/></svg></div>
<div class="t" style="left:9.30px;top:464.40px">ZNC42W</div>
<div class="t lk" style="left:107.30px;top:464.40px">LH</div>
<div class="t" style="left:167.30px;top:464.40px">Z</div>
<div class="t" style="left:227.30px;top:464.40px">Round-Trip</div>
<div class="t" style="left:306.90px;top:464.40px">26087(SEK)</div>
<div class="t" style="left:392.30px;top:464.40px">B</div>
<div class="t" style="left:583.50px;top:464.40px">02 / 12M</div>
<div class="t" style="left:648.60px;top:464.40px">14</div>
<div class="a" style="left:735px;top:463.80px;line-height:0"><svg width="12" height="12" viewBox="0 0 12 12"><rect x="0" y="0" width="12" height="12" fill="#000"/><rect x="2" y="1" width="8" height="10" fill="#fff"/><rect x="3.2" y="3.1" width="5.6" height="1" fill="#333"/><rect x="3.2" y="5" width="5.6" height="1" fill="#333"/><rect x="3.2" y="7" width="5.6" height="1" fill="#333"/></svg></div><div class="a" style="left:760px;top:463.80px;line-height:0;margin-top:-0.1px"><svg width="14" height="13" viewBox="0 0 14 13"><path d="M3.6 3.7 L9.4 9.4 M3.8 8.0 L9.2 5.2" fill="none" stroke="#c4c4c4" stroke-width="0.7"/><path d="M2.40 0.90 L4.00 2.50 L2.40 4.10 L0.80 2.50 Z M10.60 9.00 L12.20 10.60 L10.60 12.20 L9.00 10.60 Z" fill="#000" stroke="#000" stroke-width="1.3" stroke-linejoin="round"/><path d="M10.60 2.65 L12.45 4.50 L10.60 6.35 L8.75 4.50 Z M2.40 6.85 L4.25 8.70 L2.40 10.55 L0.55 8.70 Z" fill="none" stroke="#1a1a1a" stroke-width="1" stroke-linejoin="round"/></svg></div><div class="a" style="left:787px;top:463.80px;line-height:0;margin-top:1px"><svg width="10" height="10" viewBox="0 0 10 10"><path d="M3.4 0 L7.4 0 Q9.5 0.4 10 2.6 L10 3.7 L7 3.7 Q6.8 2.3 5.5 2.3 Q3.9 2.4 3.9 5 Q3.9 7.6 5.5 7.7 Q6.8 7.7 7 6.3 L10 6.3 L10 7.4 Q9.5 9.6 7.4 10 L3.4 10 Q0 9.6 0 5 Q0 0.4 3.4 0 Z" fill="#000"/></svg></div>
<div class="t" style="left:9.30px;top:485.97px">ZS00DCNB</div>
<div class="t lk" style="left:107.30px;top:485.97px">KL</div>
<div class="t" style="left:167.30px;top:485.97px">Z</div>
<div class="t" style="left:227.30px;top:485.97px">Round-Trip</div>
<div class="t" style="left:306.90px;top:485.97px">27587(SEK)</div>
<div class="t" style="left:392.30px;top:485.97px">B</div>
<div class="t" style="left:583.50px;top:485.97px">V / 12M</div>
<div class="a" style="left:735px;top:485.40px;line-height:0"><svg width="12" height="12" viewBox="0 0 12 12"><rect x="0" y="0" width="12" height="12" fill="#000"/><rect x="2" y="1" width="8" height="10" fill="#fff"/><rect x="3.2" y="3.1" width="5.6" height="1" fill="#333"/><rect x="3.2" y="5" width="5.6" height="1" fill="#333"/><rect x="3.2" y="7" width="5.6" height="1" fill="#333"/></svg></div><div class="a" style="left:760px;top:485.40px;line-height:0;margin-top:-0.1px"><svg width="14" height="13" viewBox="0 0 14 13"><path d="M3.6 3.7 L9.4 9.4 M3.8 8.0 L9.2 5.2" fill="none" stroke="#c4c4c4" stroke-width="0.7"/><path d="M2.40 0.90 L4.00 2.50 L2.40 4.10 L0.80 2.50 Z M10.60 9.00 L12.20 10.60 L10.60 12.20 L9.00 10.60 Z" fill="#000" stroke="#000" stroke-width="1.3" stroke-linejoin="round"/><path d="M10.60 2.65 L12.45 4.50 L10.60 6.35 L8.75 4.50 Z M2.40 6.85 L4.25 8.70 L2.40 10.55 L0.55 8.70 Z" fill="none" stroke="#1a1a1a" stroke-width="1" stroke-linejoin="round"/></svg></div><div class="a" style="left:787px;top:485.40px;line-height:0;margin-top:1px"><svg width="10" height="10" viewBox="0 0 10 10"><path d="M3.4 0 L7.4 0 Q9.5 0.4 10 2.6 L10 3.7 L7 3.7 Q6.8 2.3 5.5 2.3 Q3.9 2.4 3.9 5 Q3.9 7.6 5.5 7.7 Q6.8 7.7 7 6.3 L10 6.3 L10 7.4 Q9.5 9.6 7.4 10 L3.4 10 Q0 9.6 0 5 Q0 0.4 3.4 0 Z" fill="#000"/></svg></div>
<div class="t" style="left:9.30px;top:507.54px">J1SEBIZ</div>
<div class="t lk" style="left:107.30px;top:507.54px">SK</div>
<div class="t" style="left:167.30px;top:507.54px">J</div>
<div class="t" style="left:227.30px;top:507.54px">Round-Trip</div>
<div class="t" style="left:306.90px;top:507.54px">27668(SEK)</div>
<div class="t" style="left:392.30px;top:507.54px">B</div>
<div class="t" style="left:583.50px;top:507.54px">V / --</div>
<div class="t" style="left:648.60px;top:507.54px">28</div>
<div class="a" style="left:735px;top:507.00px;line-height:0"><svg width="12" height="12" viewBox="0 0 12 12"><rect x="0" y="0" width="12" height="12" fill="#000"/><rect x="2" y="1" width="8" height="10" fill="#fff"/><rect x="3.2" y="3.1" width="5.6" height="1" fill="#333"/><rect x="3.2" y="5" width="5.6" height="1" fill="#333"/><rect x="3.2" y="7" width="5.6" height="1" fill="#333"/></svg></div><div class="a" style="left:760px;top:507.00px;line-height:0;margin-top:-0.1px"><svg width="14" height="13" viewBox="0 0 14 13"><path d="M3.6 3.7 L9.4 9.4 M3.8 8.0 L9.2 5.2" fill="none" stroke="#c4c4c4" stroke-width="0.7"/><path d="M2.40 0.90 L4.00 2.50 L2.40 4.10 L0.80 2.50 Z M10.60 9.00 L12.20 10.60 L10.60 12.20 L9.00 10.60 Z" fill="#000" stroke="#000" stroke-width="1.3" stroke-linejoin="round"/><path d="M10.60 2.65 L12.45 4.50 L10.60 6.35 L8.75 4.50 Z M2.40 6.85 L4.25 8.70 L2.40 10.55 L0.55 8.70 Z" fill="none" stroke="#1a1a1a" stroke-width="1" stroke-linejoin="round"/></svg></div><div class="a" style="left:787px;top:507.00px;line-height:0;margin-top:1px"><svg width="10" height="10" viewBox="0 0 10 10"><path d="M3.4 0 L7.4 0 Q9.5 0.4 10 2.6 L10 3.7 L7 3.7 Q6.8 2.3 5.5 2.3 Q3.9 2.4 3.9 5 Q3.9 7.6 5.5 7.7 Q6.8 7.7 7 6.3 L10 6.3 L10 7.4 Q9.5 9.6 7.4 10 L3.4 10 Q0 9.6 0 5 Q0 0.4 3.4 0 Z" fill="#000"/></svg></div>
<div class="t" style="left:9.30px;top:529.11px">ZNC02W</div>
<div class="t lk" style="left:107.30px;top:529.11px">LH</div>
<div class="t" style="left:167.30px;top:529.11px">Z</div>
<div class="t" style="left:227.30px;top:529.11px">Round-Trip</div>
<div class="t" style="left:306.90px;top:529.11px">27787(SEK)</div>
<div class="t" style="left:392.30px;top:529.11px">B</div>
<div class="t" style="left:583.50px;top:529.11px">02 / 12M</div>
<div class="a" style="left:735px;top:528.60px;line-height:0"><svg width="12" height="12" viewBox="0 0 12 12"><rect x="0" y="0" width="12" height="12" fill="#000"/><rect x="2" y="1" width="8" height="10" fill="#fff"/><rect x="3.2" y="3.1" width="5.6" height="1" fill="#333"/><rect x="3.2" y="5" width="5.6" height="1" fill="#333"/><rect x="3.2" y="7" width="5.6" height="1" fill="#333"/></svg></div><div class="a" style="left:760px;top:528.60px;line-height:0;margin-top:-0.1px"><svg width="14" height="13" viewBox="0 0 14 13"><path d="M3.6 3.7 L9.4 9.4 M3.8 8.0 L9.2 5.2" fill="none" stroke="#c4c4c4" stroke-width="0.7"/><path d="M2.40 0.90 L4.00 2.50 L2.40 4.10 L0.80 2.50 Z M10.60 9.00 L12.20 10.60 L10.60 12.20 L9.00 10.60 Z" fill="#000" stroke="#000" stroke-width="1.3" stroke-linejoin="round"/><path d="M10.60 2.65 L12.45 4.50 L10.60 6.35 L8.75 4.50 Z M2.40 6.85 L4.25 8.70 L2.40 10.55 L0.55 8.70 Z" fill="none" stroke="#1a1a1a" stroke-width="1" stroke-linejoin="round"/></svg></div><div class="a" style="left:787px;top:528.60px;line-height:0;margin-top:1px"><svg width="10" height="10" viewBox="0 0 10 10"><path d="M3.4 0 L7.4 0 Q9.5 0.4 10 2.6 L10 3.7 L7 3.7 Q6.8 2.3 5.5 2.3 Q3.9 2.4 3.9 5 Q3.9 7.6 5.5 7.7 Q6.8 7.7 7 6.3 L10 6.3 L10 7.4 Q9.5 9.6 7.4 10 L3.4 10 Q0 9.6 0 5 Q0 0.4 3.4 0 Z" fill="#000"/></svg></div>
<div class="t" style="left:9.30px;top:550.68px">ZRC42W</div>
<div class="t lk" style="left:107.30px;top:550.68px">LH</div>
<div class="t" style="left:167.30px;top:550.68px">Z</div>
<div class="t" style="left:227.30px;top:550.68px">Round-Trip</div>
<div class="t" style="left:306.90px;top:550.68px">27887(SEK)</div>
<div class="t" style="left:392.30px;top:550.68px">B</div>
<div class="t" style="left:583.50px;top:550.68px">02 / 12M</div>
<div class="t" style="left:648.60px;top:550.68px">14</div>
<div class="a" style="left:735px;top:550.20px;line-height:0"><svg width="12" height="12" viewBox="0 0 12 12"><rect x="0" y="0" width="12" height="12" fill="#000"/><rect x="2" y="1" width="8" height="10" fill="#fff"/><rect x="3.2" y="3.1" width="5.6" height="1" fill="#333"/><rect x="3.2" y="5" width="5.6" height="1" fill="#333"/><rect x="3.2" y="7" width="5.6" height="1" fill="#333"/></svg></div><div class="a" style="left:760px;top:550.20px;line-height:0;margin-top:-0.1px"><svg width="14" height="13" viewBox="0 0 14 13"><path d="M3.6 3.7 L9.4 9.4 M3.8 8.0 L9.2 5.2" fill="none" stroke="#c4c4c4" stroke-width="0.7"/><path d="M2.40 0.90 L4.00 2.50 L2.40 4.10 L0.80 2.50 Z M10.60 9.00 L12.20 10.60 L10.60 12.20 L9.00 10.60 Z" fill="#000" stroke="#000" stroke-width="1.3" stroke-linejoin="round"/><path d="M10.60 2.65 L12.45 4.50 L10.60 6.35 L8.75 4.50 Z M2.40 6.85 L4.25 8.70 L2.40 10.55 L0.55 8.70 Z" fill="none" stroke="#1a1a1a" stroke-width="1" stroke-linejoin="round"/></svg></div><div class="a" style="left:787px;top:550.20px;line-height:0;margin-top:1px"><svg width="10" height="10" viewBox="0 0 10 10"><path d="M3.4 0 L7.4 0 Q9.5 0.4 10 2.6 L10 3.7 L7 3.7 Q6.8 2.3 5.5 2.3 Q3.9 2.4 3.9 5 Q3.9 7.6 5.5 7.7 Q6.8 7.7 7 6.3 L10 6.3 L10 7.4 Q9.5 9.6 7.4 10 L3.4 10 Q0 9.6 0 5 Q0 0.4 3.4 0 Z" fill="#000"/></svg></div>
<div class="t" style="left:9.30px;top:572.25px">IS00DCNB</div>
<div class="t lk" style="left:107.30px;top:572.25px">KL</div>
<div class="t" style="left:167.30px;top:572.25px">I</div>
<div class="t" style="left:227.30px;top:572.25px">Round-Trip</div>
<div class="t" style="left:306.90px;top:572.25px">29587(SEK)</div>
<div class="t" style="left:392.30px;top:572.25px">B</div>
<div class="t" style="left:583.50px;top:572.25px">V / 12M</div>
<div class="a" style="left:735px;top:571.80px;line-height:0"><svg width="12" height="12" viewBox="0 0 12 12"><rect x="0" y="0" width="12" height="12" fill="#000"/><rect x="2" y="1" width="8" height="10" fill="#fff"/><rect x="3.2" y="3.1" width="5.6" height="1" fill="#333"/><rect x="3.2" y="5" width="5.6" height="1" fill="#333"/><rect x="3.2" y="7" width="5.6" height="1" fill="#333"/></svg></div><div class="a" style="left:760px;top:571.80px;line-height:0;margin-top:-0.1px"><svg width="14" height="13" viewBox="0 0 14 13"><path d="M3.6 3.7 L9.4 9.4 M3.8 8.0 L9.2 5.2" fill="none" stroke="#c4c4c4" stroke-width="0.7"/><path d="M2.40 0.90 L4.00 2.50 L2.40 4.10 L0.80 2.50 Z M10.60 9.00 L12.20 10.60 L10.60 12.20 L9.00 10.60 Z" fill="#000" stroke="#000" stroke-width="1.3" stroke-linejoin="round"/><path d="M10.60 2.65 L12.45 4.50 L10.60 6.35 L8.75 4.50 Z M2.40 6.85 L4.25 8.70 L2.40 10.55 L0.55 8.70 Z" fill="none" stroke="#1a1a1a" stroke-width="1" stroke-linejoin="round"/></svg></div><div class="a" style="left:787px;top:571.80px;line-height:0;margin-top:1px"><svg width="10" height="10" viewBox="0 0 10 10"><path d="M3.4 0 L7.4 0 Q9.5 0.4 10 2.6 L10 3.7 L7 3.7 Q6.8 2.3 5.5 2.3 Q3.9 2.4 3.9 5 Q3.9 7.6 5.5 7.7 Q6.8 7.7 7 6.3 L10 6.3 L10 7.4 Q9.5 9.6 7.4 10 L3.4 10 Q0 9.6 0 5 Q0 0.4 3.4 0 Z" fill="#000"/></svg></div>
<div class="t" style="left:9.30px;top:593.82px">ZRC02W</div>
<div class="t lk" style="left:107.30px;top:593.82px">LH</div>
<div class="t" style="left:167.30px;top:593.82px">Z</div>
<div class="t" style="left:227.30px;top:593.82px">Round-Trip</div>
<div class="t" style="left:306.90px;top:593.82px">29587(SEK)</div>
<div class="t" style="left:392.30px;top:593.82px">B</div>
<div class="t" style="left:583.50px;top:593.82px">02 / 12M</div>
<div class="a" style="left:735px;top:593.40px;line-height:0"><svg width="12" height="12" viewBox="0 0 12 12"><rect x="0" y="0" width="12" height="12" fill="#000"/><rect x="2" y="1" width="8" height="10" fill="#fff"/><rect x="3.2" y="3.1" width="5.6" height="1" fill="#333"/><rect x="3.2" y="5" width="5.6" height="1" fill="#333"/><rect x="3.2" y="7" width="5.6" height="1" fill="#333"/></svg></div><div class="a" style="left:760px;top:593.40px;line-height:0;margin-top:-0.1px"><svg width="14" height="13" viewBox="0 0 14 13"><path d="M3.6 3.7 L9.4 9.4 M3.8 8.0 L9.2 5.2" fill="none" stroke="#c4c4c4" stroke-width="0.7"/><path d="M2.40 0.90 L4.00 2.50 L2.40 4.10 L0.80 2.50 Z M10.60 9.00 L12.20 10.60 L10.60 12.20 L9.00 10.60 Z" fill="#000" stroke="#000" stroke-width="1.3" stroke-linejoin="round"/><path d="M10.60 2.65 L12.45 4.50 L10.60 6.35 L8.75 4.50 Z M2.40 6.85 L4.25 8.70 L2.40 10.55 L0.55 8.70 Z" fill="none" stroke="#1a1a1a" stroke-width="1" stroke-linejoin="round"/></svg></div><div class="a" style="left:787px;top:593.40px;line-height:0;margin-top:1px"><svg width="10" height="10" viewBox="0 0 10 10"><path d="M3.4 0 L7.4 0 Q9.5 0.4 10 2.6 L10 3.7 L7 3.7 Q6.8 2.3 5.5 2.3 Q3.9 2.4 3.9 5 Q3.9 7.6 5.5 7.7 Q6.8 7.7 7 6.3 L10 6.3 L10 7.4 Q9.5 9.6 7.4 10 L3.4 10 Q0 9.6 0 5 Q0 0.4 3.4 0 Z" fill="#000"/></svg></div>
<div class="t" style="left:9.30px;top:615.39px">ZFF42W</div>
<div class="t lk" style="left:107.30px;top:615.39px">LH</div>
<div class="t" style="left:167.30px;top:615.39px">Z</div>
<div class="t" style="left:227.30px;top:615.39px">Round-Trip</div>
<div class="t" style="left:306.90px;top:615.39px">29687(SEK)</div>
<div class="t" style="left:392.30px;top:615.39px">B</div>
<div class="t" style="left:583.50px;top:615.39px">02 / 12M</div>
<div class="t" style="left:648.60px;top:615.39px">14</div>
<div class="a" style="left:735px;top:615.00px;line-height:0"><svg width="12" height="12" viewBox="0 0 12 12"><rect x="0" y="0" width="12" height="12" fill="#000"/><rect x="2" y="1" width="8" height="10" fill="#fff"/><rect x="3.2" y="3.1" width="5.6" height="1" fill="#333"/><rect x="3.2" y="5" width="5.6" height="1" fill="#333"/><rect x="3.2" y="7" width="5.6" height="1" fill="#333"/></svg></div><div class="a" style="left:760px;top:615.00px;line-height:0;margin-top:-0.1px"><svg width="14" height="13" viewBox="0 0 14 13"><path d="M3.6 3.7 L9.4 9.4 M3.8 8.0 L9.2 5.2" fill="none" stroke="#c4c4c4" stroke-width="0.7"/><path d="M2.40 0.90 L4.00 2.50 L2.40 4.10 L0.80 2.50 Z M10.60 9.00 L12.20 10.60 L10.60 12.20 L9.00 10.60 Z" fill="#000" stroke="#000" stroke-width="1.3" stroke-linejoin="round"/><path d="M10.60 2.65 L12.45 4.50 L10.60 6.35 L8.75 4.50 Z M2.40 6.85 L4.25 8.70 L2.40 10.55 L0.55 8.70 Z" fill="none" stroke="#1a1a1a" stroke-width="1" stroke-linejoin="round"/></svg></div><div class="a" style="left:787px;top:615.00px;line-height:0;margin-top:1px"><svg width="10" height="10" viewBox="0 0 10 10"><path d="M3.4 0 L7.4 0 Q9.5 0.4 10 2.6 L10 3.7 L7 3.7 Q6.8 2.3 5.5 2.3 Q3.9 2.4 3.9 5 Q3.9 7.6 5.5 7.7 Q6.8 7.7 7 6.3 L10 6.3 L10 7.4 Q9.5 9.6 7.4 10 L3.4 10 Q0 9.6 0 5 Q0 0.4 3.4 0 Z" fill="#000"/></svg></div>
<div class="t" style="left:9.30px;top:636.96px">Z1SEBIZ</div>
<div class="t lk" style="left:107.30px;top:636.96px">SK</div>
<div class="t" style="left:167.30px;top:636.96px">Z</div>
<div class="t" style="left:227.30px;top:636.96px">Round-Trip</div>
<div class="t" style="left:306.90px;top:636.96px">30668(SEK)</div>
<div class="t" style="left:392.30px;top:636.96px">B</div>
<div class="t" style="left:583.50px;top:636.96px">V / --</div>
<div class="a" style="left:735px;top:636.60px;line-height:0"><svg width="12" height="12" viewBox="0 0 12 12"><rect x="0" y="0" width="12" height="12" fill="#000"/><rect x="2" y="1" width="8" height="10" fill="#fff"/><rect x="3.2" y="3.1" width="5.6" height="1" fill="#333"/><rect x="3.2" y="5" width="5.6" height="1" fill="#333"/><rect x="3.2" y="7" width="5.6" height="1" fill="#333"/></svg></div><div class="a" style="left:760px;top:636.60px;line-height:0;margin-top:-0.1px"><svg width="14" height="13" viewBox="0 0 14 13"><path d="M3.6 3.7 L9.4 9.4 M3.8 8.0 L9.2 5.2" fill="none" stroke="#c4c4c4" stroke-width="0.7"/><path d="M2.40 0.90 L4.00 2.50 L2.40 4.10 L0.80 2.50 Z M10.60 9.00 L12.20 10.60 L10.60 12.20 L9.00 10.60 Z" fill="#000" stroke="#000" stroke-width="1.3" stroke-linejoin="round"/><path d="M10.60 2.65 L12.45 4.50 L10.60 6.35 L8.75 4.50 Z M2.40 6.85 L4.25 8.70 L2.40 10.55 L0.55 8.70 Z" fill="none" stroke="#1a1a1a" stroke-width="1" stroke-linejoin="round"/></svg></div><div class="a" style="left:787px;top:636.60px;line-height:0;margin-top:1px"><svg width="10" height="10" viewBox="0 0 10 10"><path d="M3.4 0 L7.4 0 Q9.5 0.4 10 2.6 L10 3.7 L7 3.7 Q6.8 2.3 5.5 2.3 Q3.9 2.4 3.9 5 Q3.9 7.6 5.5 7.7 Q6.8 7.7 7 6.3 L10 6.3 L10 7.4 Q9.5 9.6 7.4 10 L3.4 10 Q0 9.6 0 5 Q0 0.4 3.4 0 Z" fill="#000"/></svg></div>
<div class="t" style="left:9.30px;top:658.53px">ZFF02W</div>
<div class="t lk" style="left:107.30px;top:658.53px">LH</div>
<div class="t" style="left:167.30px;top:658.53px">Z</div>
<div class="t" style="left:227.30px;top:658.53px">Round-Trip</div>
<div class="t" style="left:306.90px;top:658.53px">31387(SEK)</div>
<div class="t" style="left:392.30px;top:658.53px">B</div>
<div class="t" style="left:583.50px;top:658.53px">02 / 12M</div>
<div class="a" style="left:735px;top:658.20px;line-height:0"><svg width="12" height="12" viewBox="0 0 12 12"><rect x="0" y="0" width="12" height="12" fill="#000"/><rect x="2" y="1" width="8" height="10" fill="#fff"/><rect x="3.2" y="3.1" width="5.6" height="1" fill="#333"/><rect x="3.2" y="5" width="5.6" height="1" fill="#333"/><rect x="3.2" y="7" width="5.6" height="1" fill="#333"/></svg></div><div class="a" style="left:760px;top:658.20px;line-height:0;margin-top:-0.1px"><svg width="14" height="13" viewBox="0 0 14 13"><path d="M3.6 3.7 L9.4 9.4 M3.8 8.0 L9.2 5.2" fill="none" stroke="#c4c4c4" stroke-width="0.7"/><path d="M2.40 0.90 L4.00 2.50 L2.40 4.10 L0.80 2.50 Z M10.60 9.00 L12.20 10.60 L10.60 12.20 L9.00 10.60 Z" fill="#000" stroke="#000" stroke-width="1.3" stroke-linejoin="round"/><path d="M10.60 2.65 L12.45 4.50 L10.60 6.35 L8.75 4.50 Z M2.40 6.85 L4.25 8.70 L2.40 10.55 L0.55 8.70 Z" fill="none" stroke="#1a1a1a" stroke-width="1" stroke-linejoin="round"/></svg></div><div class="a" style="left:787px;top:658.20px;line-height:0;margin-top:1px"><svg width="10" height="10" viewBox="0 0 10 10"><path d="M3.4 0 L7.4 0 Q9.5 0.4 10 2.6 L10 3.7 L7 3.7 Q6.8 2.3 5.5 2.3 Q3.9 2.4 3.9 5 Q3.9 7.6 5.5 7.7 Q6.8 7.7 7 6.3 L10 6.3 L10 7.4 Q9.5 9.6 7.4 10 L3.4 10 Q0 9.6 0 5 Q0 0.4 3.4 0 Z" fill="#000"/></svg></div>
<div class="t" style="left:9.30px;top:680.10px">ZSEBIZ</div>
<div class="t lk" style="left:107.30px;top:680.10px">SK</div>
<div class="t" style="left:167.30px;top:680.10px">Z</div>
<div class="t" style="left:227.30px;top:680.10px">Round-Trip</div>
<div class="t" style="left:306.90px;top:680.10px">32820(SEK)</div>
<div class="t" style="left:392.30px;top:680.10px">B</div>
<div class="a" style="left:735px;top:679.80px;line-height:0"><svg width="12" height="12" viewBox="0 0 12 12"><rect x="0" y="0" width="12" height="12" fill="#000"/><rect x="2" y="1" width="8" height="10" fill="#fff"/><rect x="3.2" y="3.1" width="5.6" height="1" fill="#333"/><rect x="3.2" y="5" width="5.6" height="1" fill="#333"/><rect x="3.2" y="7" width="5.6" height="1" fill="#333"/></svg></div><div class="a" style="left:760px;top:679.80px;line-height:0;margin-top:-0.1px"><svg width="14" height="13" viewBox="0 0 14 13"><path d="M3.6 3.7 L9.4 9.4 M3.8 8.0 L9.2 5.2" fill="none" stroke="#c4c4c4" stroke-width="0.7"/><path d="M2.40 0.90 L4.00 2.50 L2.40 4.10 L0.80 2.50 Z M10.60 9.00 L12.20 10.60 L10.60 12.20 L9.00 10.60 Z" fill="#000" stroke="#000" stroke-width="1.3" stroke-linejoin="round"/><path d="M10.60 2.65 L12.45 4.50 L10.60 6.35 L8.75 4.50 Z M2.40 6.85 L4.25 8.70 L2.40 10.55 L0.55 8.70 Z" fill="none" stroke="#1a1a1a" stroke-width="1" stroke-linejoin="round"/></svg></div><div class="a" style="left:787px;top:679.80px;line-height:0;margin-top:1px"><svg width="10" height="10" viewBox="0 0 10 10"><path d="M3.4 0 L7.4 0 Q9.5 0.4 10 2.6 L10 3.7 L7 3.7 Q6.8 2.3 5.5 2.3 Q3.9 2.4 3.9 5 Q3.9 7.6 5.5 7.7 Q6.8 7.7 7 6.3 L10 6.3 L10 7.4 Q9.5 9.6 7.4 10 L3.4 10 Q0 9.6 0 5 Q0 0.4 3.4 0 Z" fill="#000"/></svg></div>
<div class="a" style="left:735px;top:701.40px;line-height:0"><svg width="12" height="12" viewBox="0 0 12 12"><rect x="0" y="0" width="12" height="12" fill="#000"/><rect x="2" y="1" width="8" height="10" fill="#fff"/><rect x="3.2" y="3.1" width="5.6" height="1" fill="#333"/><rect x="3.2" y="5" width="5.6" height="1" fill="#333"/><rect x="3.2" y="7" width="5.6" height="1" fill="#333"/></svg></div><div class="a" style="left:760px;top:701.40px;line-height:0;margin-top:-0.1px"><svg width="14" height="13" viewBox="0 0 14 13"><path d="M3.6 3.7 L9.4 9.4 M3.8 8.0 L9.2 5.2" fill="none" stroke="#c4c4c4" stroke-width="0.7"/><path d="M2.40 0.90 L4.00 2.50 L2.40 4.10 L0.80 2.50 Z M10.60 9.00 L12.20 10.60 L10.60 12.20 L9.00 10.60 Z" fill="#000" stroke="#000" stroke-width="1.3" stroke-linejoin="round"/><path d="M10.60 2.65 L12.45 4.50 L10.60 6.35 L8.75 4.50 Z M2.40 6.85 L4.25 8.70 L2.40 10.55 L0.55 8.70 Z" fill="none" stroke="#1a1a1a" stroke-width="1" stroke-linejoin="round"/></svg></div><div class="a" style="left:787px;top:701.40px;line-height:0;margin-top:1px"><svg width="10" height="10" viewBox="0 0 10 10"><path d="M3.4 0 L7.4 0 Q9.5 0.4 10 2.6 L10 3.7 L7 3.7 Q6.8 2.3 5.5 2.3 Q3.9 2.4 3.9 5 Q3.9 7.6 5.5 7.7 Q6.8 7.7 7 6.3 L10 6.3 L10 7.4 Q9.5 9.6 7.4 10 L3.4 10 Q0 9.6 0 5 Q0 0.4 3.4 0 Z" fill="#000"/></svg></div>
</body></html>
